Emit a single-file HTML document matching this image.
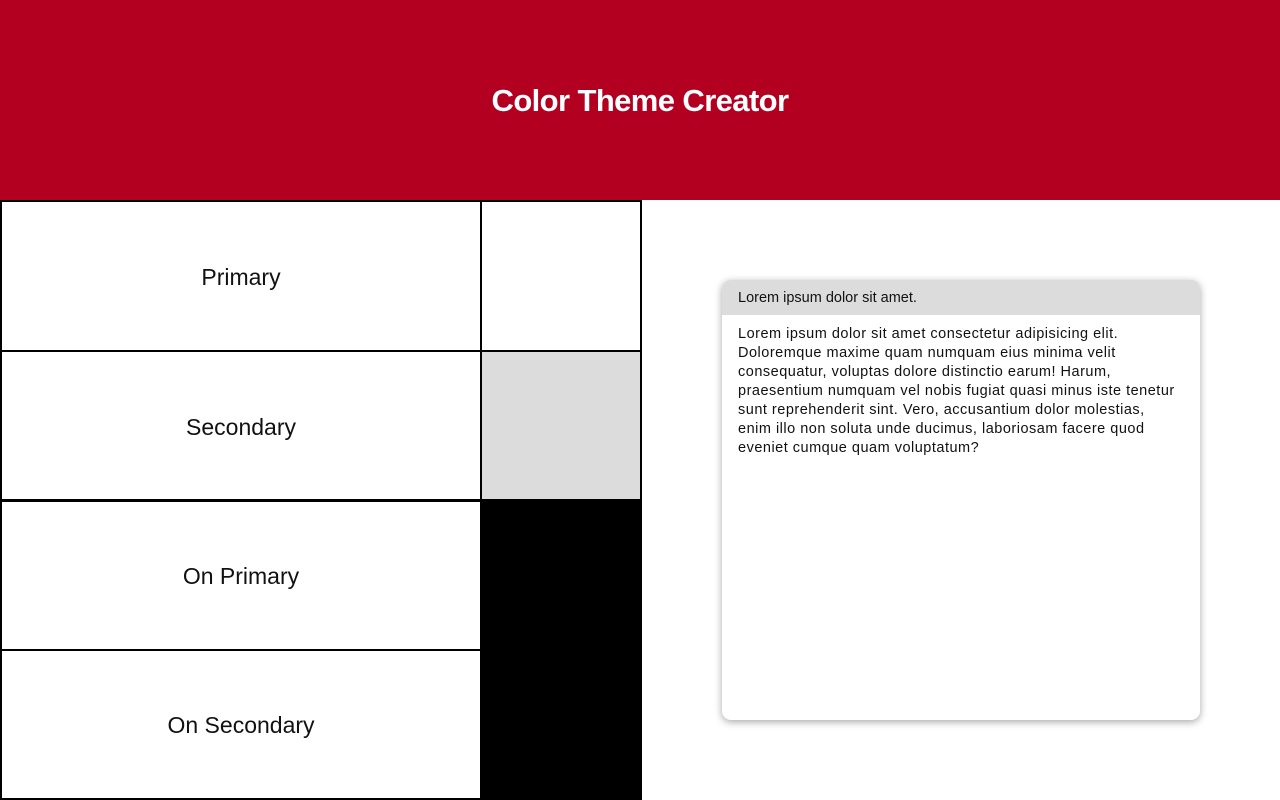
<!DOCTYPE html>
<html><head><style>
*{margin:0;padding:0;box-sizing:border-box}
body{width:1280px;height:800px;background:#fff;font-family:"Liberation Sans",sans-serif;position:relative;overflow:hidden}
.hdr{position:absolute;left:0;top:0;width:1280px;height:200px;background:#b30021;color:#fff;font-weight:bold;font-size:31px;letter-spacing:-0.6px;text-align:center;line-height:202px}
.c{position:absolute;border:2px solid #000;display:flex;align-items:center;justify-content:center;font-size:23px;color:#111;padding-top:2px}
.card{position:absolute;left:722px;top:280px;width:478px;height:440px;border-radius:9px;box-shadow:0 2px 8px rgba(0,0,0,.35);overflow:hidden;background:#fff}
.ch{background:#dcdcdc;height:35px;padding:10px 16px 0;font-size:14.5px;color:#111}
.cb{padding:10px 20px 9px 16px;font-size:14.5px;line-height:19px;color:#111;letter-spacing:0.5px}
</style></head><body>
<div class="hdr">Color Theme Creator</div>
<div class="c" style="left:0;top:200px;width:482px;height:152px">Primary</div>
<div class="c" style="left:480px;top:200px;width:162px;height:152px"></div>
<div class="c" style="left:0;top:350px;width:482px;height:152px">Secondary</div>
<div class="c" style="left:480px;top:350px;width:162px;height:152px;background:#dcdcdc"></div>
<div class="c" style="left:0;top:499px;width:482px;height:152px">On Primary</div>
<div class="c" style="left:480px;top:499px;width:162px;height:152px;background:#000"></div>
<div class="c" style="left:0;top:649px;width:482px;height:151px">On Secondary</div>
<div class="c" style="left:480px;top:649px;width:162px;height:151px;background:#000"></div>
<div class="card"><div class="ch">Lorem ipsum dolor sit amet.</div><div class="cb">Lorem ipsum dolor sit amet consectetur adipisicing elit.<br>Doloremque maxime quam numquam eius minima velit consequatur, voluptas dolore distinctio earum! Harum, praesentium numquam vel nobis fugiat quasi minus iste tenetur sunt reprehenderit sint. Vero, accusantium dolor molestias, enim illo non soluta unde ducimus, laboriosam facere quod eveniet cumque quam voluptatum?</div></div>
</body></html>
